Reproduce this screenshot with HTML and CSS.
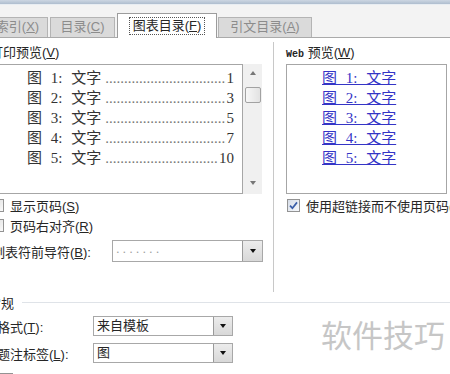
FILE: index.html
```html
<!DOCTYPE html>
<html lang="zh-CN">
<head>
    <meta charset="UTF-8">
    <meta name="viewport" content="width=device-width, initial-scale=1.0">
    <title>索引和目录</title>
    <link rel="stylesheet" href="styles.css">
</head>
<body>

<div class="dialog">
    <div class="titlebar"></div>

    <div class="tabs">
        <div class="tab tab-index">索引(<u>X</u>)</div>
        <div class="tab tab-toc">目录(<u>C</u>)</div>
        <div class="tab tab-figures active"><span class="focus">图表目录(<u>F</u>)</span></div>
        <div class="tab tab-cites">引文目录(<u>A</u>)</div>
    </div>

    <div class="panel">
        <div class="columns">
            <div class="col-print">
                <div class="caption">打印预览(<u>V</u>)</div>
                <div class="preview-wrap">
                    <div class="preview">
                        <div class="entry"><span class="name">图 1: 文字</span><span class="leader">..................................................</span><span class="page">1</span></div>
                        <div class="entry"><span class="name">图 2: 文字</span><span class="leader">..................................................</span><span class="page">3</span></div>
                        <div class="entry"><span class="name">图 3: 文字</span><span class="leader">..................................................</span><span class="page">5</span></div>
                        <div class="entry"><span class="name">图 4: 文字</span><span class="leader">..................................................</span><span class="page">7</span></div>
                        <div class="entry"><span class="name">图 5: 文字</span><span class="leader">..................................................</span><span class="page">10</span></div>
                    </div>
                    <div class="scrollbar">
                        <span class="arrow-up"></span>
                        <span class="thumb"></span>
                        <span class="arrow-down"></span>
                    </div>
                </div>
                <div class="check first"><span class="box"></span><span>显示页码(<u>S</u>)</span></div>
                <div class="check"><span class="box"></span><span>页码右对齐(<u>R</u>)</span></div>
                <div class="field leader-field">
                    <span class="field-label">制表符前导符(<u>B</u>):</span>
                    <div class="combo combo-leader"><span class="value">.......</span><span class="drop"></span></div>
                </div>
            </div>

            <div class="col-web">
                <div class="caption"><span class="web">Web</span> 预览(<u>W</u>)</div>
                <div class="web-preview">
                    <a class="link">图 1: 文字</a>
                    <a class="link">图 2: 文字</a>
                    <a class="link">图 3: 文字</a>
                    <a class="link">图 4: 文字</a>
                    <a class="link">图 5: 文字</a>
                </div>
                <div class="check first">
                    <span class="box checked">
                        <svg width="11" height="11" viewBox="0 0 11 11"><path d="M2 5.6 L4.4 8.2 L9 2.4" fill="none" stroke="#3a5ea8" stroke-width="1.7"/></svg>
                    </span>
                    <span>使用超链接而不使用页码(<u>H</u>)</span>
                </div>
            </div>
        </div>

        <div class="group">
            <div class="group-head"><span>常规</span><span class="rule"></span></div>
            <div class="field row-format">
                <span class="field-label">格式(<u>T</u>):</span>
                <div class="combo"><span class="value">来自模板</span><span class="drop"></span></div>
            </div>
            <div class="field row-label">
                <span class="field-label">题注标签(<u>L</u>):</span>
                <div class="combo"><span class="value">图</span><span class="drop"></span></div>
            </div>
            <div class="check row-include"><span class="box"></span><span>包括标签和编号(<u>N</u>)</span></div>
        </div>
    </div>

    <div class="watermark">软件技巧</div>
</div>

</body>
</html>
```

FILE: styles.css
```css
body {
    margin: 0;
    width: 450px;
    height: 374px;
    overflow: hidden;
    background: #fff;
    font-family: "Liberation Sans", "Noto Sans CJK SC", sans-serif;
    font-size: 13px;
    color: #262626;
}

u {
    text-decoration: underline;
}

.dialog {
    position: relative;
    height: 374px;
    overflow: hidden;
}

.titlebar {
    height: 4px;
    background: linear-gradient(#ccd6e2, #aebdce);
    border-bottom: 1px solid #e8edf2;
}

/* tab strip */
.tabs {
    display: flex;
    align-items: flex-end;
    gap: 2px;
    height: 32px;
    margin-left: -13px;
    background: #f3f3f3;
}

.tab {
    box-sizing: border-box;
    height: 20px;
    line-height: 18px;
    border: 1px solid #b4b4b4;
    border-bottom: none;
    background: #dadada;
    color: #8c8c8c;
    text-align: center;
}

.tab-index { width: 61px; }
.tab-toc { width: 65px; }
.tab-figures { width: 100px; }
.tab-cites { width: 94px; margin-left: -1px; }

.tab.active {
    height: 25px;
    margin-bottom: -1px;
    padding-top: 3px;
    background: #fff;
    color: #262626;
    border-color: #9c9c9c;
    z-index: 1;
}

.focus {
    display: inline-block;
    line-height: 16px;
    padding: 0 3px;
    border: 1px dotted #555;
}

/* content */
.panel {
    border-top: 1px solid #aaa;
    background: #fff;
}

.columns {
    display: flex;
    height: 254px;
}

.col-print {
    box-sizing: border-box;
    flex-shrink: 0;
    width: 283px;
    margin-left: -10px;
    padding-top: 6px;
}

.col-web {
    flex: 1;
    min-width: 0;
    margin-top: 4px;
    padding: 2px 0 0 12px;
    border-left: 1px solid #c8c8c8;
}

.caption {
    height: 18px;
    line-height: 18px;
    margin-bottom: 2px;
    white-space: nowrap;
}

.web {
    font-family: "Liberation Mono", monospace;
    font-size: 10px;
    font-weight: bold;
}

.preview-wrap {
    display: flex;
    height: 130px;
}

.preview {
    box-sizing: border-box;
    width: 253px;
    border: 1px solid #a6a6a6;
    padding: 3px 8px 0 36px;
    font-family: "Liberation Serif", "Noto Sans CJK SC", serif;
    font-size: 15px;
    color: #333;
}

.entry {
    display: flex;
    height: 20px;
    line-height: 20px;
    white-space: nowrap;
}

.name {
    word-spacing: 5px;
}

.leader {
    flex: 1;
    min-width: 0;
    overflow: hidden;
    margin: 0 1px 0 4px;
    color: #777;
}

.scrollbar {
    display: flex;
    flex-direction: column;
    align-items: center;
    width: 19px;
    background: #f0f0f0;
}

.arrow-up,
.arrow-down {
    width: 0;
    height: 0;
    border-left: 3px solid transparent;
    border-right: 3px solid transparent;
}

.arrow-up {
    margin-top: 7px;
    border-bottom: 4px solid #777;
}

.arrow-down {
    margin-top: auto;
    margin-bottom: 9px;
    border-top: 4px solid #777;
}

.thumb {
    box-sizing: border-box;
    width: 16px;
    height: 16px;
    margin-top: 12px;
    border: 1px solid #a2a2a2;
    border-radius: 2px;
    background: linear-gradient(90deg, #f7f7f7, #e2e2e2);
}

.web-preview {
    box-sizing: border-box;
    width: 161px;
    height: 130px;
    border: 1px solid #a6a6a6;
    padding: 3px 0 0 35px;
}

.link {
    display: block;
    height: 20px;
    line-height: 20px;
    font-family: "Liberation Serif", "Noto Sans CJK SC", serif;
    font-size: 15px;
    word-spacing: 5px;
    color: #3434c6;
    text-decoration: underline;
    white-space: nowrap;
}

/* checkboxes */
.check {
    display: flex;
    align-items: center;
    gap: 6px;
    height: 20px;
    white-space: nowrap;
}

.check.first {
    margin-top: 1px;
}

.box {
    box-sizing: border-box;
    display: flex;
    align-items: center;
    justify-content: center;
    flex-shrink: 0;
    width: 13px;
    height: 13px;
    margin-left: 1px;
    border: 1px solid #939393;
    background: linear-gradient(135deg, #dcdcdc, #fafafa);
}

.box.checked {
    background: linear-gradient(135deg, #d6dde8, #f6f8fb);
}

/* fields and combos */
.field {
    display: flex;
    align-items: center;
    white-space: nowrap;
}

.leader-field {
    margin-top: 5px;
}

.leader-field .field-label {
    width: 122px;
    padding-left: 2px;
    box-sizing: border-box;
}

.combo {
    box-sizing: border-box;
    display: flex;
    width: 140px;
    height: 20px;
    border: 1px solid #a8a8a8;
    background: #fff;
}

.combo-leader {
    width: 151px;
    height: 22px;
}

.combo .value {
    flex: 1;
    padding-left: 3px;
    line-height: 18px;
}

.combo-leader .value {
    line-height: 16px;
    letter-spacing: 3px;
    color: #a0a0a0;
}

.drop {
    display: flex;
    align-items: center;
    justify-content: center;
    width: 18px;
    border-left: 1px solid #9a9a9a;
    background: linear-gradient(#ececec, #d8d8d8);
}

.combo-leader .drop {
    width: 19px;
}

.drop::after {
    content: "";
    width: 0;
    height: 0;
    border-left: 3px solid transparent;
    border-right: 3px solid transparent;
    border-top: 4px solid #111;
}

/* general group */
.group {
    margin-left: -12px;
}

.group-head {
    display: flex;
    align-items: center;
    height: 20px;
}

.rule {
    flex: 1;
    margin-left: 8px;
    border-top: 1px solid #dfe3e8;
}

.group .field {
    height: 20px;
    padding-left: 9px;
}

.group .field-label {
    width: 96px;
}

.row-format {
    margin-top: 4px;
}

.row-label {
    margin-top: 7px;
}

.row-include {
    margin-top: 6px;
    padding-left: 11px;
    gap: 7px;
}

.watermark {
    position: absolute;
    left: 321px;
    top: 321px;
    font-size: 31px;
    line-height: 1;
    color: #c6c6c6;
}
```
